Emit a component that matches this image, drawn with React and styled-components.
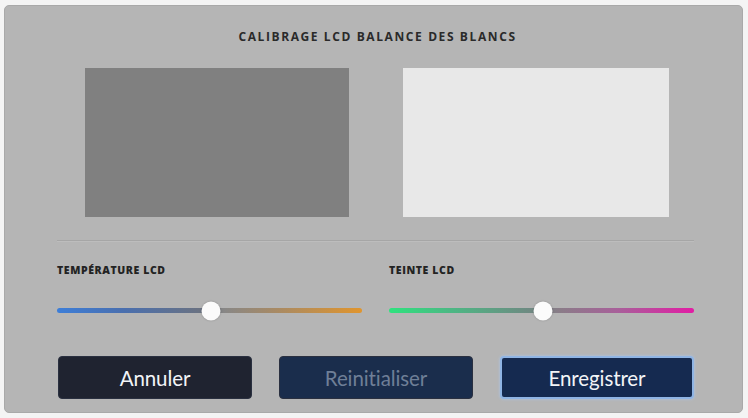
import React from "react";
import styled, { createGlobalStyle } from "styled-components";

const Global = createGlobalStyle`
  html, body { margin: 0; padding: 0; background: #f4f4f4; }
  body { font-family: Lato, "Open Sans", sans-serif; }
`;

const Page = styled.div`
  width: 748px;
  height: 418px;
  padding: 5px 5px 5px 4px;
  box-sizing: border-box;
`;

const Panel = styled.div`
  width: 739px;
  height: 408px;
  box-sizing: border-box;
  background: #b5b5b5;
  border: 1px solid #a9a9a9;
  border-radius: 5px;
  padding: 0 48px 0 52px;
  display: flex;
  flex-direction: column;
`;

const Title = styled.h1`
  margin: 23px 0 0;
  height: 16px;
  line-height: 16px;
  text-align: center;
  font-family: "Open Sans", Lato, sans-serif;
  font-size: 12px;
  font-weight: 700;
  letter-spacing: 1.6px;
  color: #2a2a2a;
  padding-left: 4px;
`;

const Swatches = styled.div`
  display: flex;
  justify-content: center;
  gap: 54px;
  margin-top: 23px;
  padding-left: 2px;
`;

const Swatch = styled.div`
  width: ${(p) => p.$w}px;
  height: 149px;
  background: ${(p) => p.$color};
`;

const Divider = styled.div`
  margin-top: 23px;
  height: 1px;
  background: #a6a6a6;
  box-shadow: 0 1px 0 #bdbdbd;
`;

const Controls = styled.div`
  display: grid;
  grid-template-columns: 305px 305px;
  column-gap: 27px;
  margin-top: 22px;
`;

const Control = styled.div`
  display: flex;
  flex-direction: column;
`;

const Label = styled.div`
  height: 15px;
  line-height: 15px;
  font-family: "Open Sans", Lato, sans-serif;
  font-size: 10.5px;
  font-weight: 800;
  letter-spacing: 0.6px;
  color: #232323;
`;

const Track = styled.div`
  position: relative;
  margin-top: 30px;
  height: 5px;
  border-radius: 3px;
  background: ${(p) => p.$gradient};
`;

const Thumb = styled.div`
  position: absolute;
  top: 50%;
  width: 19px;
  height: 19px;
  border-radius: 50%;
  background: #fbfbfb;
  transform: translate(-50%, -50%);
  box-shadow: 0 0 2px rgba(0, 0, 0, 0.25);
`;

const Buttons = styled.div`
  display: grid;
  grid-template-columns: repeat(3, 194px);
  column-gap: 27px;
  margin-top: 43px;
  padding-left: 1px;
`;

const Button = styled.button`
  height: 43px;
  box-sizing: border-box;
  border-radius: 4px;
  border: ${(p) => (p.$focused ? "2px solid #8fb4e4" : "1px solid #2a3040")};
  background: ${(p) => p.$bg};
  color: ${(p) => (p.$dim ? "#6f7f97" : "#f2f4f7")};
  font-family: Lato, "Open Sans", sans-serif;
  font-size: 20.5px;
  font-weight: 400;
  letter-spacing: -0.1px;
  padding: 0;
  box-shadow: ${(p) => (p.$focused ? "0 0 3px #a9c6ee" : "none")};
`;

function Slider({ label, gradient, value }) {
  return (
    <Control>
      <Label>{label}</Label>
      <Track $gradient={gradient}>
        <Thumb style={{ left: `${value}%` }} />
      </Track>
    </Control>
  );
}

export default function App() {
  return (
    <>
      <Global />
      <Page>
        <Panel>
          <Title>CALIBRAGE LCD BALANCE DES BLANCS</Title>
          <Swatches>
            <Swatch $w={264} $color="#808080" />
            <Swatch $w={266} $color="#e8e8e8" />
          </Swatches>
          <Divider />
          <Controls>
            <Slider
              label="TEMPÉRATURE LCD"
              value={50.5}
              gradient="linear-gradient(90deg, #3d7ed8 0%, #4a6fae 22%, #6a7282 47%, #888786 55%, #a88a64 72%, #e0952e 100%)"
            />
            <Slider
              label="TEINTE LCD"
              value={50.5}
              gradient="linear-gradient(90deg, #2fe27e 0%, #4cb884 20%, #6e8a82 46%, #8a7c88 56%, #a8609a 75%, #e21ca4 100%)"
            />
          </Controls>
          <Buttons>
            <Button $bg="#1f2330">Annuler</Button>
            <Button $bg="#1a2d4c" $dim>Reinitialiser</Button>
            <Button $bg="#152a50" $focused>Enregistrer</Button>
          </Buttons>
        </Panel>
      </Page>
    </>
  );
}
